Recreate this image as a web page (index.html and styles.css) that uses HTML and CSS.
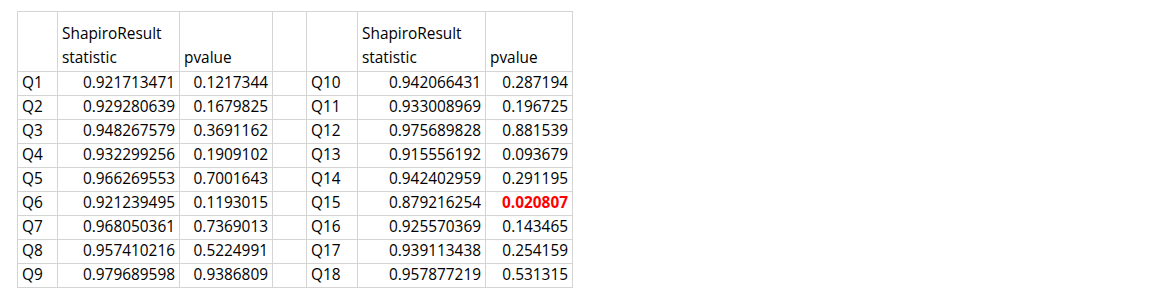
FILE: index.html
```html
<!DOCTYPE html>
<html>
<head>
<meta charset="utf-8">
<link rel="stylesheet" href="styles.css">
</head>
<body>
<div class="sheet">
<table class="grid">
<colgroup>
<col class="c1"><col class="c2"><col class="c3"><col class="c4"><col class="c5"><col class="c6"><col class="c7">
</colgroup>
<tr class="head">
<td></td><td>ShapiroResult<br>statistic</td><td class="low">pvalue</td><td></td><td></td><td>ShapiroResult<br>statistic</td><td class="low">pvalue</td>
</tr>
<tr><td>Q1</td><td class="n">0.921713471</td><td class="n">0.1217344</td><td></td><td>Q10</td><td class="n">0.942066431</td><td class="n">0.287194</td></tr>
<tr><td>Q2</td><td class="n">0.929280639</td><td class="n">0.1679825</td><td></td><td>Q11</td><td class="n">0.933008969</td><td class="n">0.196725</td></tr>
<tr><td>Q3</td><td class="n">0.948267579</td><td class="n">0.3691162</td><td></td><td>Q12</td><td class="n">0.975689828</td><td class="n">0.881539</td></tr>
<tr><td>Q4</td><td class="n">0.932299256</td><td class="n">0.1909102</td><td></td><td>Q13</td><td class="n">0.915556192</td><td class="n">0.093679</td></tr>
<tr><td>Q5</td><td class="n">0.966269553</td><td class="n">0.7001643</td><td></td><td>Q14</td><td class="n">0.942402959</td><td class="n">0.291195</td></tr>
<tr><td>Q6</td><td class="n">0.921239495</td><td class="n">0.1193015</td><td></td><td>Q15</td><td class="n">0.879216254</td><td class="n sig">0.020807</td></tr>
<tr><td>Q7</td><td class="n">0.968050361</td><td class="n">0.7369013</td><td></td><td>Q16</td><td class="n">0.925570369</td><td class="n">0.143465</td></tr>
<tr><td>Q8</td><td class="n">0.957410216</td><td class="n">0.5224991</td><td></td><td>Q17</td><td class="n">0.939113438</td><td class="n">0.254159</td></tr>
<tr><td>Q9</td><td class="n">0.979689598</td><td class="n">0.9386809</td><td></td><td>Q18</td><td class="n">0.957877219</td><td class="n">0.531315</td></tr>
</table>
</div>
</body>
</html>
```

FILE: styles.css
```css
html, body {
  margin: 0;
  padding: 0;
  background: #ffffff;
}
.sheet {
  padding: 11px 0 0 17px;
}
.grid {
  border-collapse: collapse;
  table-layout: fixed;
  width: 555px;
  font-family: "Open Sans", "Liberation Sans", sans-serif;
  font-size: 15.4px;
  color: #000000;
}
.c1 { width: 40px; }
.c2 { width: 122px; }
.c3 { width: 93px; }
.c4 { width: 34px; }
.c5 { width: 51px; }
.c6 { width: 128px; }
.c7 { width: 87px; }
.grid td {
  border: 1px solid #d4d4d4;
  height: 21px;
  padding: 0 4px 2px 4px;
  line-height: 21px;
  vertical-align: bottom;
  white-space: nowrap;
  overflow: hidden;
}
.grid .head td {
  height: 49px;
  padding-top: 10px;
  padding-bottom: 0;
  line-height: 24px;
  vertical-align: top;
}
.grid .head td.low {
  padding-top: 34px;
  height: 25px;
}
.grid td.n {
  text-align: right;
}
.grid td.sig {
  color: #ff0000;
  font-weight: bold;
}
```
